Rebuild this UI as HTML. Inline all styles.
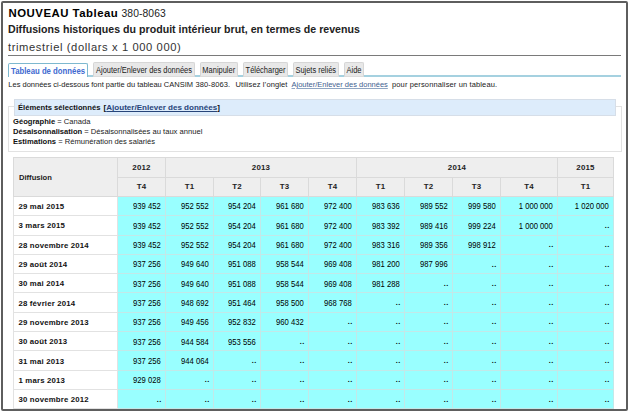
<!DOCTYPE html>
<html><head><meta charset="utf-8">
<style>
*{margin:0;padding:0;box-sizing:border-box}
html,body{width:630px;height:412px;overflow:hidden;background:#fff;font-family:"Liberation Sans",sans-serif;color:#333}
.frame{position:absolute;left:1px;top:1px;width:627px;height:410px;border:2px solid #5e5e5e;border-radius:2px}
.abs{position:absolute;white-space:nowrap;line-height:1}
#t1{left:8.5px;top:8px;font-size:11.4px;font-weight:bold;color:#000;letter-spacing:0.5px}
#t1 span{font-weight:normal;font-size:10.3px;color:#222;letter-spacing:0.1px;margin-left:-0.5px}
#t2{left:8px;top:23.7px;font-size:10.6px;font-weight:bold;color:#222;letter-spacing:0.015px}
#t3{left:8px;top:41.6px;font-size:11.2px;color:#333;letter-spacing:0.6px}
#rule{position:absolute;left:8px;top:55px;width:613px;height:1px;background:#7a7a7a}
.tabline{position:absolute;left:8px;top:75px;width:613px;height:2px;background:rgba(110,180,205,0.62)}
.tab{position:absolute;top:62px;height:15px;border:1px solid #d6d6d6;border-bottom:1px solid #dcdcdc;border-radius:2px 2px 0 0;background:#e8e8e8;color:#1a1a1a;text-align:center;white-space:nowrap;z-index:1}
.tab span{position:absolute;left:-20px;right:-20px;top:3.2px;text-align:center;font-size:8.3px;line-height:1;transform:scaleX(0.9)}
.tab.act{top:63px;height:14px;background:#fff;border:1px solid #7db8cf;border-bottom:none;color:#4169d0;font-weight:bold;z-index:2}
.tab.act span{font-size:8.4px;transform:scaleX(0.927);top:2.6px}
#intro span{position:absolute;top:80.8px;font-size:7.5px;white-space:nowrap;line-height:1;color:#1a1a1a}
#intro .lnk{color:#3f6190;text-decoration:underline;text-decoration-color:#8fa5c2}
.box{position:absolute;left:8px;top:106px;width:614px;height:46px;border:1px solid #e2e2e2}
.bhead{position:absolute;left:14px;top:99px;width:602px;height:17px;background:#ddecfb;border:1px solid #d6dee8}
#el{position:absolute;left:18px;top:104.3px;font-size:7.65px;font-weight:bold;color:#111;white-space:nowrap;line-height:1}
#el a{color:#27457a;text-decoration:underline}
.sel{position:absolute;left:13px;font-size:7.6px;white-space:nowrap;line-height:1;color:#1a1a1a}
.sel b{color:#111}
table{position:absolute;left:13px;top:157px;border-collapse:collapse;font-size:7.6px;table-layout:fixed}
td,th{border:1px solid #c3e8e8;white-space:nowrap;padding:0 5px 0 0;text-align:right}
th{border-color:#dadada;background:#eeeeee;color:#222;font-weight:bold;text-align:center;height:19.5px;padding:0;font-size:7.9px;letter-spacing:0.2px}
th.lab{text-align:left;padding-left:5px;letter-spacing:0;font-size:7.6px}
td.lab{border-color:#e2e2e2;background:#fff;font-weight:bold;text-align:left;padding-left:4.5px;color:#111;font-size:7.8px;letter-spacing:0.17px;padding-top:1px}
td{background:#99ffff;height:19.3px;color:#000;padding-right:4.6px}
td .n{display:inline-block;font-size:8.5px;transform:scaleX(0.9);transform-origin:100% 50%;line-height:1;position:relative;top:0.8px}
td.na{font-weight:bold;letter-spacing:0.5px;padding-right:3.2px;font-size:7.2px}
</style></head><body>
<div class="frame"></div>
<div id="t1" class="abs">NOUVEAU Tableau <span>380-8063</span></div>
<div id="t2" class="abs">Diffusions historiques du produit intérieur brut, en termes de revenus</div>
<div id="t3" class="abs">trimestriel (dollars x 1 000 000)</div>
<div id="rule"></div>
<div class="tabline"></div>
<div class="tab act" style="left:8px;width:80px"><span>Tableau de données</span></div>
<div class="tab" style="left:93px;width:102px"><span>Ajouter/Enlever des données</span></div>
<div class="tab" style="left:200px;width:37.5px"><span>Manipuler</span></div>
<div class="tab" style="left:243px;width:45px"><span>Télécharger</span></div>
<div class="tab" style="left:293px;width:45.5px"><span>Sujets reliés</span></div>
<div class="tab" style="left:344px;width:20px"><span>Aide</span></div>
<div id="intro">
<span style="left:8.3px">Les données ci-dessous font partie du tableau CANSIM</span>
<span style="left:195.5px;letter-spacing:0.1px">380-8063.</span>
<span style="left:235.5px;letter-spacing:0.12px">Utilisez l’onglet</span>
<span class="lnk" style="left:291.5px">Ajouter/Enlever des données</span>
<span style="left:392px;letter-spacing:0.13px">pour personnaliser un tableau.</span>
</div>
<div class="box"></div>
<div class="bhead"></div>
<div id="el"><span style="position:absolute;left:0">Éléments sélectionnés</span><span style="position:absolute;left:85.6px;font-size:8.05px">[<a>Ajouter/Enlever des données</a>]</span></div>
<div class="sel" style="top:117.9px"><b>Géographie</b> = Canada</div>
<div class="sel" style="top:128px"><b>Désaisonnalisation</b> = Désaisonnalisées au taux annuel</div>
<div class="sel" style="top:138.2px"><b>Estimations</b> = Rémunération des salariés</div>
<table>
<colgroup><col style="width:104px"><col style="width:48px"><col style="width:48px"><col style="width:47px"><col style="width:48px"><col style="width:48px"><col style="width:48px"><col style="width:48px"><col style="width:48px"><col style="width:57px"><col style="width:56px"></colgroup>
<tr><th class="lab" rowspan="2">Diffusion</th><th>2012</th><th colspan="4">2013</th><th colspan="4">2014</th><th>2015</th></tr>
<tr><th>T4</th><th>T1</th><th>T2</th><th>T3</th><th>T4</th><th>T1</th><th>T2</th><th>T3</th><th>T4</th><th>T1</th></tr>
<tr><td class="lab">29 mai 2015</td><td><span class="n">939 452</span></td><td><span class="n">952 552</span></td><td><span class="n">954 204</span></td><td><span class="n">961 680</span></td><td><span class="n">972 400</span></td><td><span class="n">983 636</span></td><td><span class="n">989 552</span></td><td><span class="n">999 580</span></td><td><span class="n">1 000 000</span></td><td><span class="n">1 020 000</span></td></tr>
<tr><td class="lab">3 mars 2015</td><td><span class="n">939 452</span></td><td><span class="n">952 552</span></td><td><span class="n">954 204</span></td><td><span class="n">961 680</span></td><td><span class="n">972 400</span></td><td><span class="n">983 392</span></td><td><span class="n">989 416</span></td><td><span class="n">999 224</span></td><td><span class="n">1 000 000</span></td><td class="na">..</td></tr>
<tr><td class="lab">28 novembre 2014</td><td><span class="n">939 452</span></td><td><span class="n">952 552</span></td><td><span class="n">954 204</span></td><td><span class="n">961 680</span></td><td><span class="n">972 400</span></td><td><span class="n">983 316</span></td><td><span class="n">989 356</span></td><td><span class="n">998 912</span></td><td class="na">..</td><td class="na">..</td></tr>
<tr><td class="lab">29 août 2014</td><td><span class="n">937 256</span></td><td><span class="n">949 640</span></td><td><span class="n">951 088</span></td><td><span class="n">958 544</span></td><td><span class="n">969 408</span></td><td><span class="n">981 200</span></td><td><span class="n">987 996</span></td><td class="na">..</td><td class="na">..</td><td class="na">..</td></tr>
<tr><td class="lab">30 mai 2014</td><td><span class="n">937 256</span></td><td><span class="n">949 640</span></td><td><span class="n">951 088</span></td><td><span class="n">958 544</span></td><td><span class="n">969 408</span></td><td><span class="n">981 288</span></td><td class="na">..</td><td class="na">..</td><td class="na">..</td><td class="na">..</td></tr>
<tr><td class="lab">28 février 2014</td><td><span class="n">937 256</span></td><td><span class="n">948 692</span></td><td><span class="n">951 464</span></td><td><span class="n">958 500</span></td><td><span class="n">968 768</span></td><td class="na">..</td><td class="na">..</td><td class="na">..</td><td class="na">..</td><td class="na">..</td></tr>
<tr><td class="lab">29 novembre 2013</td><td><span class="n">937 256</span></td><td><span class="n">949 456</span></td><td><span class="n">952 832</span></td><td><span class="n">960 432</span></td><td class="na">..</td><td class="na">..</td><td class="na">..</td><td class="na">..</td><td class="na">..</td><td class="na">..</td></tr>
<tr><td class="lab">30 août 2013</td><td><span class="n">937 256</span></td><td><span class="n">944 584</span></td><td><span class="n">953 556</span></td><td class="na">..</td><td class="na">..</td><td class="na">..</td><td class="na">..</td><td class="na">..</td><td class="na">..</td><td class="na">..</td></tr>
<tr><td class="lab">31 mai 2013</td><td><span class="n">937 256</span></td><td><span class="n">944 064</span></td><td class="na">..</td><td class="na">..</td><td class="na">..</td><td class="na">..</td><td class="na">..</td><td class="na">..</td><td class="na">..</td><td class="na">..</td></tr>
<tr><td class="lab">1 mars 2013</td><td><span class="n">929 028</span></td><td class="na">..</td><td class="na">..</td><td class="na">..</td><td class="na">..</td><td class="na">..</td><td class="na">..</td><td class="na">..</td><td class="na">..</td><td class="na">..</td></tr>
<tr><td class="lab">30 novembre 2012</td><td class="na">..</td><td class="na">..</td><td class="na">..</td><td class="na">..</td><td class="na">..</td><td class="na">..</td><td class="na">..</td><td class="na">..</td><td class="na">..</td><td class="na">..</td></tr>
</table>
</body></html>
